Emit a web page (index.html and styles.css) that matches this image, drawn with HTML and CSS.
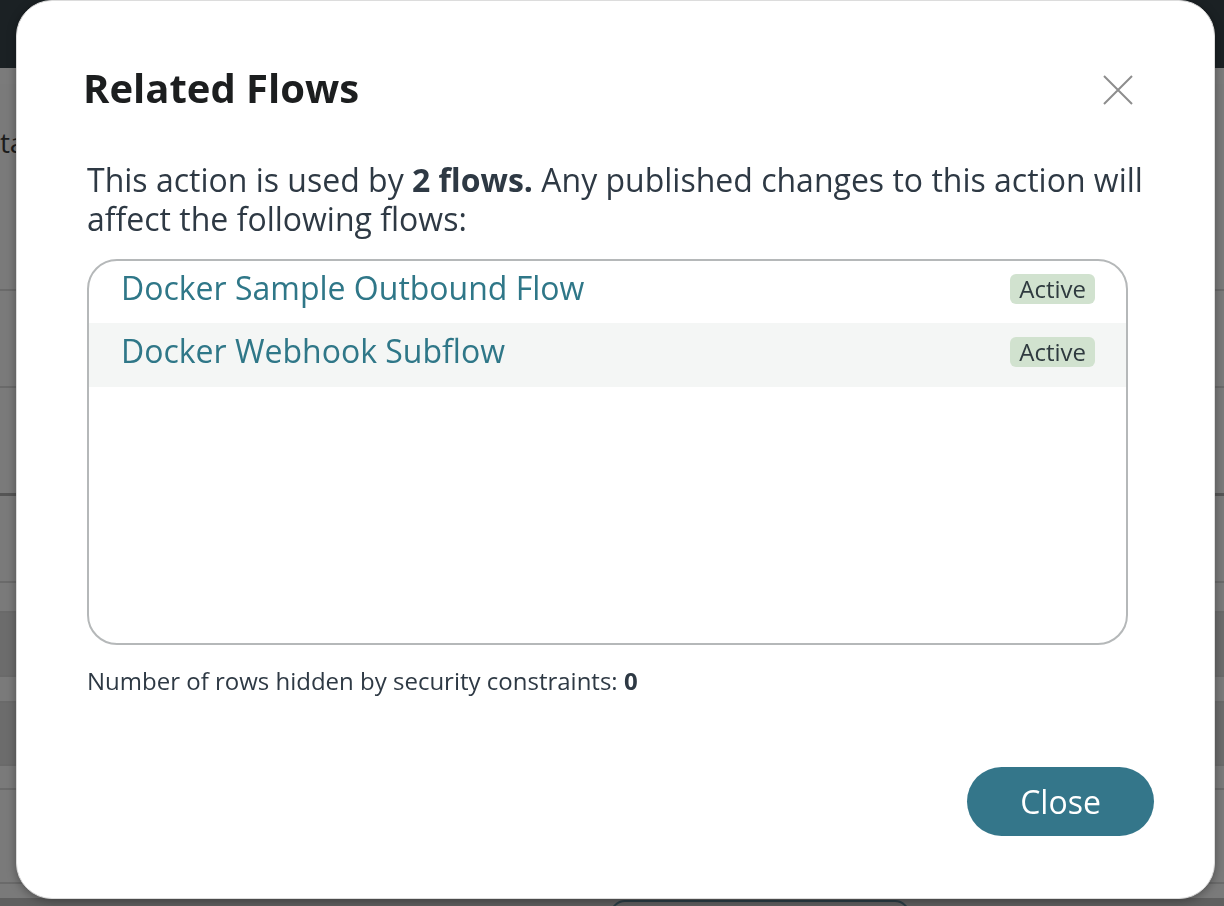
FILE: index.html
```html
<!DOCTYPE html>
<html lang="en">
<head>
<meta charset="utf-8">
<title>Related Flows</title>
<link rel="stylesheet" href="styles.css">
</head>
<body>
<div class="page">
  <div class="topbar"></div>
  <div class="band"></div>
  <div class="bg-row r1"><span class="bg-text">Data</span></div>
  <div class="bg-row r2"></div>
  <div class="bg-row r3"></div>
  <div class="bg-row r4"></div>
  <div class="bg-row r5"></div>
  <div class="bg-row r6 dark"></div>
  <div class="bg-row r7"></div>
  <div class="bg-row r8 dark"></div>
  <div class="bg-row r9"></div>
  <div class="bg-row r10"></div>
  <div class="bg-row r11"></div>
  <div class="bg-bottom"><span class="bg-btn"></span></div>
</div>

<div class="modal" role="dialog" aria-labelledby="modal-title">
  <div class="modal-header">
    <h1 id="modal-title" class="modal-title">Related Flows</h1>
    <button class="close-x" aria-label="Close">
      <svg width="32" height="32" viewBox="0 0 32 32" aria-hidden="true">
        <path d="M2 2 L30 30 M30 2 L2 30" stroke="#8d8d8d" stroke-width="2" fill="none"/>
      </svg>
    </button>
  </div>
  <p class="intro">This action is used by <strong>2 flows.</strong> Any published changes to this action will affect the following flows:</p>
  <ul class="flow-list">
    <li class="flow-row">
      <a class="flow-link" href="#">Docker Sample Outbound Flow</a>
      <span class="badge">Active</span>
    </li>
    <li class="flow-row alt">
      <a class="flow-link" href="#">Docker Webhook Subflow</a>
      <span class="badge">Active</span>
    </li>
  </ul>
  <p class="hidden-note">Number of rows hidden by security constraints: <strong>0</strong></p>
  <div class="modal-footer">
    <button class="btn-close">Close</button>
  </div>
</div>
</body>
</html>
```

FILE: styles.css
```css
* { box-sizing: border-box; }

html, body {
  margin: 0;
  padding: 0;
  width: 1224px;
  height: 906px;
  overflow: hidden;
  font-family: "Open Sans", "Liberation Sans", sans-serif;
}

/* ---------- background page (dimmed) ---------- */
.page {
  width: 1224px;
  height: 906px;
  background: #777777;
  display: flex;
  flex-direction: column;
}
.topbar { height: 68px; background: #1b2124; flex: none; }
.band { height: 16px; background: #7b7b7b; flex: none; }
.bg-row {
  flex: none;
  background: #7a7a7a;
  border-bottom: 2px solid #6a6a6a;
}
.bg-row.dark { background: #6c6c6c; }
.r1 { height: 207px; padding: 39px 0 0 0; }
.r2 { height: 97px; }
.r3 { height: 108px; border-bottom: 3px solid #555; }
.r4 { height: 87px; }
.r5 { height: 30px; }
.r6 { height: 64px; }
.r7 { height: 26px; }
.r8 { height: 63px; }
.r9 { height: 24px; }
.r10 { height: 94px; }
.r11 { height: 14px; border-bottom: none; }
.bg-text {
  display: block;
  font-size: 28px;
  color: #1c1c1c;
  margin-left: -36px;
  line-height: 38px;
}
.bg-bottom {
  flex: 1;
  background: #5f5f5f;
  position: relative;
}
.bg-btn {
  position: absolute;
  left: 610px;
  top: 2px;
  width: 300px;
  height: 30px;
  border: 2px solid #2b3e46;
  border-radius: 20px;
}

/* ---------- modal ---------- */
.modal {
  position: fixed;
  left: 16px;
  top: 0;
  width: 1199px;
  height: 899px;
  background: #ffffff;
  border: 1px solid #dcdcdc;
  border-radius: 36px;
  box-shadow: 0 2px 10px rgba(0, 0, 0, 0.35);
  padding: 63px 60px 0 70px;
  display: flex;
  flex-direction: column;
  color: #2e3944;
}

.modal-header {
  display: flex;
  align-items: center;
  justify-content: space-between;
  height: 48px;
}
.modal-title {
  margin: 0 0 0 -4px;
  font-size: 40px;
  line-height: 48px;
  font-weight: 700;
  color: #1c1e1f;
}
.close-x {
  border: 0;
  background: transparent;
  padding: 0;
  margin-right: 20px;
  margin-top: 4px;
  width: 32px;
  height: 32px;
  display: flex;
}

.intro {
  margin: 48px 0 0 0;
  max-width: 1070px;
  font-size: 32px;
  line-height: 39px;
  color: #2e3944;
}
.intro strong { font-weight: 700; }

.flow-list {
  list-style: none;
  margin: 21px 0 0 0;
  padding: 0;
  width: 1041px;
  height: 386px;
  border: 2px solid #b5b8b9;
  border-radius: 30px;
  overflow: hidden;
}
.flow-row {
  height: 64px;
  display: flex;
  align-items: center;
  justify-content: space-between;
  padding: 0 31px 0 32px;
}
.flow-row:first-child { height: 62px; }
.flow-row.alt { background: #f4f6f5; }
.flow-link {
  font-size: 32px;
  line-height: 40px;
  color: #2f7788;
  text-decoration: none;
  margin-top: -8px;
}
.badge {
  display: inline-block;
  height: 30px;
  line-height: 30px;
  padding: 0 9px;
  border-radius: 6px;
  background: #d1e2cf;
  color: #2f3a3f;
  font-size: 24px;
  margin-top: -6px;
}

.hidden-note {
  margin: 21px 0 0 0;
  font-size: 24px;
  line-height: 30px;
  color: #2e3944;
}
.hidden-note strong { font-weight: 700; }

.modal-footer {
  display: flex;
  justify-content: flex-end;
  margin-top: 71px;
}
.btn-close {
  width: 187px;
  height: 69px;
  border: 0;
  border-radius: 35px;
  background: #34768a;
  color: #ffffff;
  font-family: "Open Sans", "Liberation Sans", sans-serif;
  font-size: 32px;
  line-height: 40px;
  padding: 0;
}
```
